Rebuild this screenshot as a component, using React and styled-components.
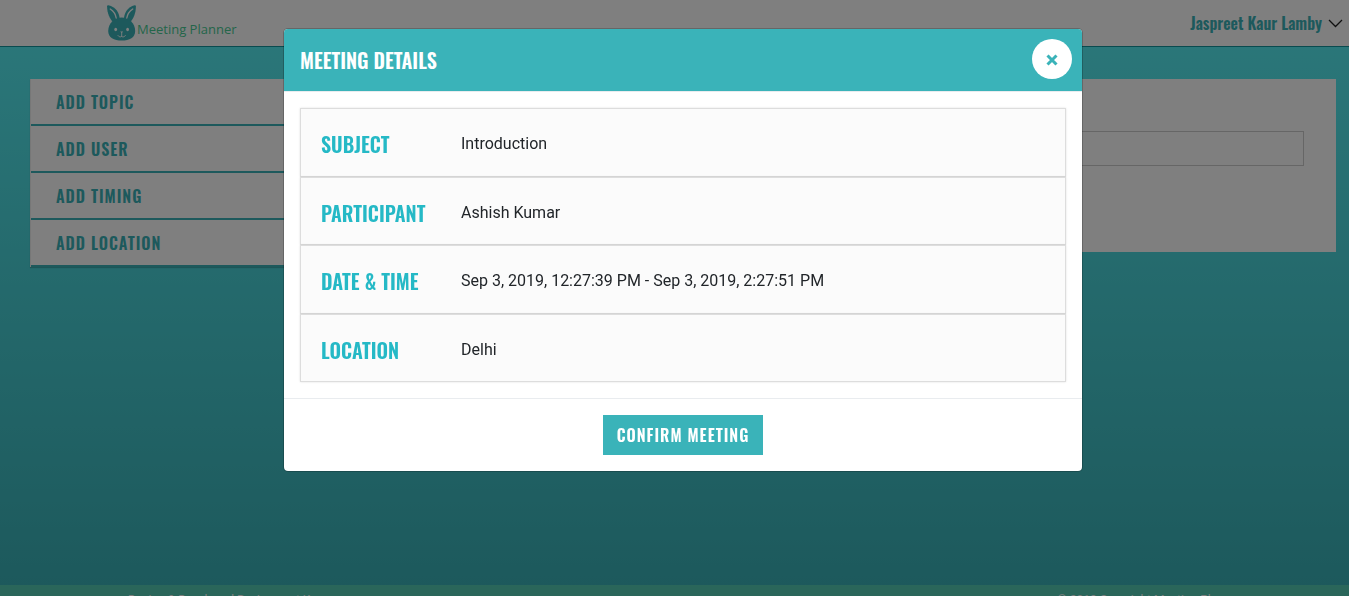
import React from "react";
import styled, { createGlobalStyle } from "styled-components";

const display = `Oswald, "Roboto Condensed", "Liberation Sans", sans-serif`;
const body = `Roboto, "Liberation Sans", sans-serif`;
const teal = "#3ab3b9";

const GlobalStyle = createGlobalStyle`
  *, *::before, *::after { box-sizing: border-box; }
  body {
    margin: 0;
    overflow: hidden;
    font-family: ${body};
    font-size: 16px;
    line-height: 24px;
    color: #212529;
  }
`;

const Page = styled.div`
  display: flex;
  flex-direction: column;
  height: 100vh;
`;

const TopBar = styled.header`
  flex: none;
  display: flex;
  align-items: center;
  justify-content: space-between;
  height: 47px;
  padding: 0 6px 0 107px;
  background: #fff;
  border-bottom: 1px solid #12969f;
`;

const Brand = styled.a`
  display: flex;
  align-items: flex-end;
  color: #48cc94;
  font-family: "Open Sans", "Noto Sans", sans-serif;
  font-size: 13px;
  font-weight: 500;
  line-height: 24px;
  text-decoration: none;

  svg { display: block; }
`;

const UserMenu = styled.button`
  display: flex;
  align-items: center;
  gap: 6px;
  padding: 0;
  border: 0;
  background: none;
  color: ${teal};
  font-family: ${display};
  font-size: 16px;
  font-weight: 600;
  line-height: 24px;
`;

const Main = styled.main`
  flex: 1 0 538px;
  display: flex;
  align-items: flex-start;
  gap: 30px;
  padding: 32px 13px 32px 30px;
  background: linear-gradient(#55edf2, ${teal});
`;

const SideNav = styled.nav`
  flex: 0 0 30%;
  border-left: 1px solid #eee;
  box-shadow: 0 1px 1px rgba(0, 0, 0, 0.2);
`;

const SideLink = styled.a`
  display: block;
  height: 47px;
  padding: 11px 25px 10px;
  background: #fff;
  border-bottom: 2px solid ${teal};
  color: ${teal};
  font-family: ${display};
  font-size: 16px;
  font-weight: 600;
  letter-spacing: 1px;
  text-transform: uppercase;
  text-decoration: none;
`;

const FormPanel = styled.section`
  flex: 1;
  padding: 52px 32px 86px;
  background: #fff;
`;

const TextInput = styled.input`
  display: block;
  width: 100%;
  height: 35px;
  padding: 0 12px;
  border: 1px solid #ccc;
  background: #fff;
  font: inherit;
`;

const Footer = styled.footer`
  flex: none;
  display: flex;
  justify-content: space-between;
  height: 11px;
  padding: 3px 108px 0 128px;
  background: #55ccb5;
  color: #fff;
  font-size: 12px;
  line-height: 24px;
`;

const Backdrop = styled.div`
  position: fixed;
  inset: 0;
  display: flex;
  align-items: flex-start;
  justify-content: center;
  padding: 28px 0 28px 17px;
  background: rgba(0, 0, 0, 0.5);
`;

const Dialog = styled.div`
  width: 100%;
  max-width: 800px;
  overflow: hidden;
  background: #fff;
  background-clip: padding-box;
  border: 1px solid rgba(0, 0, 0, 0.2);
  border-radius: 5px;
`;

const DialogHeader = styled.div`
  display: flex;
  align-items: flex-start;
  justify-content: space-between;
  padding: 10px 10px 12px 16px;
  background: ${teal};
  border-bottom: 1px solid #e9ecef;
`;

const DialogTitle = styled.h2`
  margin: 0;
  color: #fff;
  font-family: ${display};
  font-size: 20px;
  font-weight: 600;
  line-height: 42px;
  height: 40px;
  text-transform: uppercase;
`;

const CloseButton = styled.button`
  display: flex;
  align-items: center;
  justify-content: center;
  width: 40px;
  height: 40px;
  padding: 2px 0 0;
  border: 0;
  border-radius: 50%;
  background: #fff;
  color: ${teal};
`;

const DialogBody = styled.div`
  padding: 16px;
`;

const Details = styled.dl`
  display: grid;
  grid-auto-rows: 1fr;
  min-height: 274px;
  margin: 0;
`;

const DetailRow = styled.div`
  display: grid;
  grid-template-columns: 140px 1fr;
  align-items: center;
  padding: 4px 20px 0;
  background: #fbfbfb;
  border: 1px solid #ddd;
  box-shadow: 0 0 2px rgba(0, 0, 0, 0.12);
`;

const DetailLabel = styled.dt`
  color: #25b9c6;
  font-family: ${display};
  font-size: 20px;
  font-weight: 600;
  line-height: 30px;
  text-transform: uppercase;
`;

const DetailValue = styled.dd`
  margin: 0;
`;

const DialogFooter = styled.div`
  display: flex;
  justify-content: center;
  padding: 16px;
  border-top: 1px solid #e9ecef;
`;

const ConfirmButton = styled.button`
  height: 40px;
  padding: 0 14px;
  border: 0;
  background: ${teal};
  color: #fff;
  font-family: ${display};
  font-size: 16px;
  font-weight: 600;
  letter-spacing: 1px;
  text-transform: uppercase;
`;

const RabbitLogo = () => (
  <svg width="30" height="36" viewBox="0 0 30 36" aria-hidden="true">
    <g fill={teal}>
      <path d="M12.6 14.6C13 8.2 8.6 1.6 1.4.2.4.1.1.7.1 1.6.1 8 2.6 13.8 6.3 17.5Z" />
      <path d="M17 14.6C16.6 8.2 21 1.6 27.6.2c1-.1 1.3.5 1.3 1.4 0 6.4-2.3 12.2-6 15.9Z" />
      <path d="M14.7 12.4C21.5 12.4 28.2 17.8 28.2 26 28.2 32.6 22.5 35.6 14.7 35.6S1.2 32.6 1.2 26C1.2 17.8 7.9 12.4 14.7 12.4Z" />
    </g>
    <path d="M3.2 4c3.2 2 5.400 5.200 6 9M25.800 4c-3.200 2-5.400 5.200-6 9" fill="none" stroke="#fff" strokeWidth="1.300" strokeLinecap="round" />
    <g fill="#fff">
      <ellipse cx="8.700" cy="24.500" rx="1.400" ry="1.800" />
      <ellipse cx="20.600" cy="24.500" rx="1.400" ry="1.800" />
      <path d="M13.200 26.600h3l-1.500 1.600Z" />
    </g>
    <path d="M14.700 28v3.400M11 30.600c.8 1.300 2.700 1.700 3.700.8 1 .9 2.900.5 3.700-.8" fill="none" stroke="#fff" strokeWidth="0.900" strokeLinecap="round" />
  </svg>
);

const ChevronDown = () => (
  <svg width="15" height="9" viewBox="0 0 15 9" aria-hidden="true">
    <path d="M1 1l6.500 6.500L14 1" fill="none" stroke="#222" strokeWidth="1.300" />
  </svg>
);

const CloseIcon = () => (
  <svg width="12" height="12" viewBox="0 0 12 12" aria-hidden="true">
    <path d="M1.500 1.500l9 9M10.500 1.500l-9 9" fill="none" stroke="currentColor" strokeWidth="3" />
  </svg>
);

const steps = ["Add Topic", "Add User", "Add Timing", "Add Location"];

const details = [
  ["Subject", "Introduction"],
  ["Participant", "Ashish Kumar"],
  ["Date & Time", "Sep 3, 2019, 12:27:39 PM - Sep 3, 2019, 2:27:51 PM"],
  ["Location", "Delhi"],
];

export default function App() {
  return (
    <>
      <GlobalStyle />
      <Page>
        <TopBar>
          <Brand href="#">
            <RabbitLogo />
            Meeting Planner
          </Brand>
          <UserMenu type="button">
            Jaspreet Kaur Lamby
            <ChevronDown />
          </UserMenu>
        </TopBar>
        <Main>
          <SideNav>
            {steps.map((step) => (
              <SideLink key={step} href="#">{step}</SideLink>
            ))}
          </SideNav>
          <FormPanel>
            <TextInput type="text" aria-label="Location" />
          </FormPanel>
        </Main>
        <Footer>
          <span>Design &amp; Developed By Jaspreet Kaur</span>
          <span>© 2019 Copyright Meeting Planner</span>
        </Footer>
      </Page>
      <Backdrop>
        <Dialog role="dialog" aria-modal="true" aria-labelledby="dialog-title">
          <DialogHeader>
            <DialogTitle id="dialog-title">Meeting Details</DialogTitle>
            <CloseButton type="button" aria-label="Close">
              <CloseIcon />
            </CloseButton>
          </DialogHeader>
          <DialogBody>
            <Details>
              {details.map(([label, value]) => (
                <DetailRow key={label}>
                  <DetailLabel>{label}</DetailLabel>
                  <DetailValue>{value}</DetailValue>
                </DetailRow>
              ))}
            </Details>
          </DialogBody>
          <DialogFooter>
            <ConfirmButton type="button">Confirm Meeting</ConfirmButton>
          </DialogFooter>
        </Dialog>
      </Backdrop>
    </>
  );
}
